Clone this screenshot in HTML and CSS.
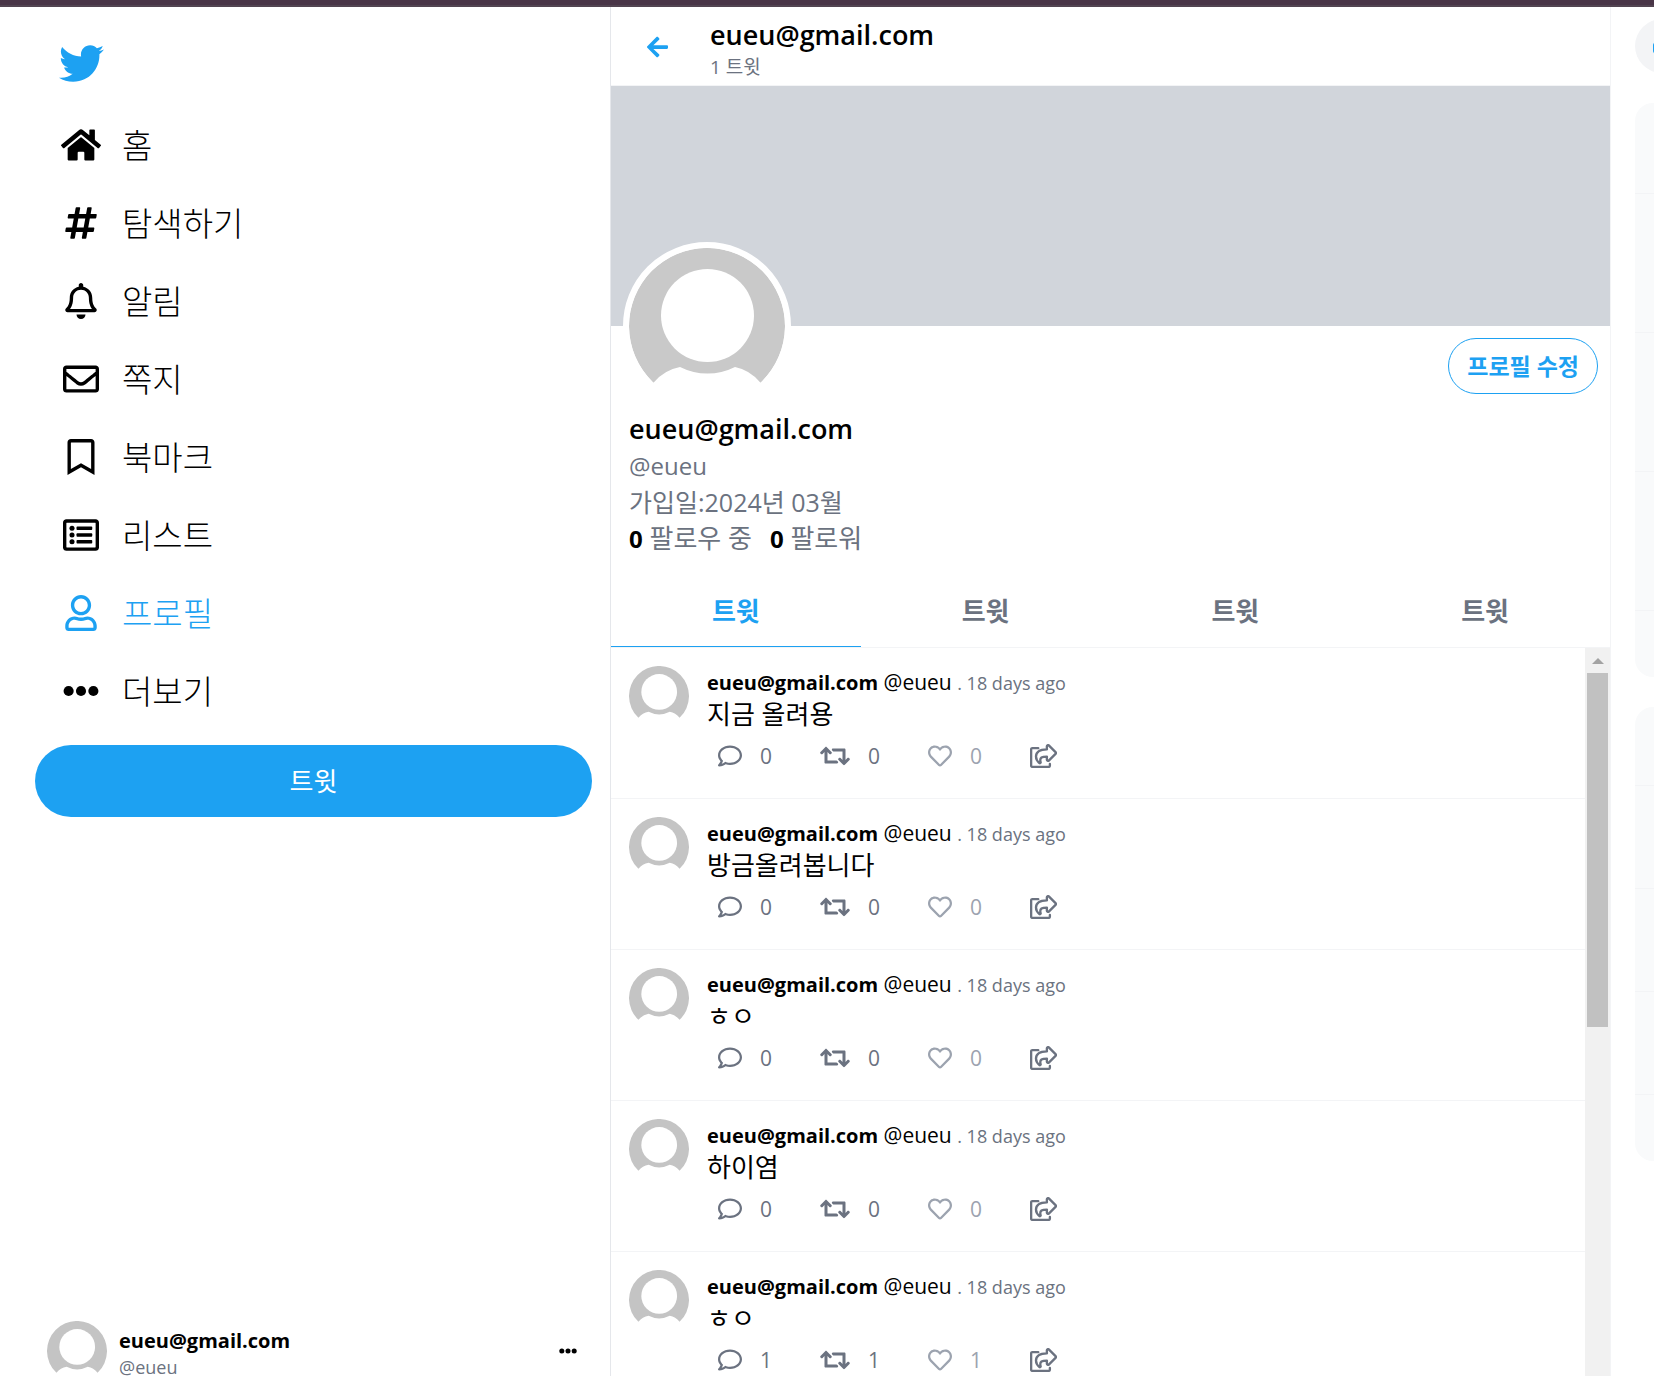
FILE: index.html
```html
<!DOCTYPE html>
<html lang="ko">
<head>
<meta charset="utf-8">
<meta name="viewport" content="width=device-width, initial-scale=1">
<title>eueu@gmail.com</title>
<link rel="stylesheet" href="styles.css">
</head>
<body>
<svg class="sprite" aria-hidden="true">
  <symbol id="comment" viewBox="0 0 512 512"><path d="M256 32C114.6 32 0 125.1 0 240c0 47.6 19.9 91.2 52.9 126.3C38 405.7 7 439.1 6.5 439.5c-6.6 7-8.4 17.2-4.6 26S14.4 480 24 480c61.5 0 110-25.7 139.1-46.3C192 442.8 223.2 448 256 448c141.4 0 256-93.1 256-208S397.4 32 256 32zm0 368c-26.7 0-53.1-4.1-78.4-12.1l-22.7-7.2-19.5 13.8c-14.3 10.1-33.9 21.4-57.5 29 7.3-12.1 14.4-25.7 19.9-40.2l10.6-28.1-20.6-21.8C69.7 314.1 48 282.2 48 240c0-88.2 93.3-160 208-160s208 71.8 208 160-93.3 160-208 160z"/></symbol>
  <symbol id="retweet" viewBox="0 0 640 512"><path d="M629.657 343.598L528.971 444.284c-9.373 9.372-24.568 9.372-33.941 0L394.343 343.598c-9.373-9.373-9.373-24.569 0-33.941l10.823-10.823c9.562-9.562 25.133-9.34 34.419.492L480 342.118V160H292.451a24.005 24.005 0 0 1-16.971-7.029l-16-16C244.361 121.851 255.069 96 276.451 96H520c13.255 0 24 10.745 24 24v222.118l40.416-42.792c9.285-9.831 24.856-10.054 34.419-.492l10.823 10.823c9.372 9.372 9.372 24.569-.001 33.941zm-265.138 15.431A23.999 23.999 0 0 0 347.548 352H160V169.881l40.416 42.792c9.286 9.831 24.856 10.054 34.419.491l10.822-10.822c9.373-9.373 9.373-24.569 0-33.941L144.971 67.716c-9.373-9.373-24.569-9.373-33.941 0L10.343 168.402c-9.373 9.373-9.373 24.569 0 33.941l10.822 10.822c9.562 9.562 25.133 9.34 34.419-.491L96 169.881V392c0 13.255 10.745 24 24 24h243.549c21.382 0 32.09-25.851 16.971-40.971l-16.001-16z"/></symbol>
  <symbol id="heart" viewBox="0 0 512 512"><path d="M458.4 64.3C400.6 15.7 311.3 23 256 79.3 200.7 23 111.4 15.6 53.6 64.3-21.6 127.6-10.6 230.8 43 285.5l175.4 178.7c10 10.2 23.4 15.9 37.6 15.9 14.3 0 27.6-5.6 37.6-15.8L469 285.6c53.5-54.7 64.7-157.9-10.6-221.3zm-23.6 187.5L259.4 430.5c-2.4 2.4-4.4 2.4-6.8 0L77.2 251.8c-36.5-37.2-43.9-107.6 7.3-150.7 38.9-32.7 98.9-27.8 136.5 10.5l35 35.7 35-35.7c37.8-38.5 97.8-43.2 136.5-10.6 51.1 43.1 43.5 113.9 7.3 150.8z"/></symbol>
  <symbol id="share" viewBox="0 0 576 512"><g fill="none" stroke="currentColor" stroke-width="50" stroke-linejoin="round" stroke-linecap="round"><path d="M176 88H48c-13 0-24 11-24 24v352c0 13 11 24 24 24h352c13 0 24-11 24-24v-40"/><path d="M360 48c0-21 26-32 41-17l144 144c10 10 10 24 0 34L401 353c-15 15-41 4-41-17v-68c-96 0-165 16-133 122 4 16-14 26-26 17-40-30-73-84-73-138 0-118 92-150 232-153z"/></g></symbol>
  <symbol id="dots" viewBox="0 0 512 512"><circle cx="80" cy="256" r="72"/><circle cx="256" cy="256" r="72"/><circle cx="432" cy="256" r="72"/></symbol>
  <symbol id="avatar" viewBox="0 0 156 156"><path d="M24.500 134.700A78 78 0 1 1 131.500 134.700Q121 122 106 119A61 61 0 0 1 51 119Q35 122 24.500 134.700Z"/><circle cx="78.500" cy="67.500" r="46.500" fill="#fff"/></symbol>
</svg>

<div class="topbar"></div>
<div class="app">
  <header class="sidebar">
    <a class="logo" href="#" aria-label="Twitter"><svg viewBox="0 0 512 512"><path d="M459.37 151.716c.325 4.548.325 9.097.325 13.645 0 138.72-105.583 298.558-298.558 298.558-59.452 0-114.68-17.219-161.137-47.106 8.447.974 16.568 1.299 25.34 1.299 49.055 0 94.213-16.568 130.274-44.832-46.132-.975-84.792-31.188-98.112-72.772 6.498.974 12.995 1.624 19.818 1.624 9.421 0 18.843-1.3 27.614-3.573-48.081-9.747-84.143-51.98-84.143-102.985v-1.299c13.969 7.797 30.214 12.67 47.431 13.319-28.264-18.843-46.781-51.005-46.781-87.391 0-19.492 5.197-37.36 14.294-52.954 51.655 63.675 129.3 105.258 216.365 109.807-1.624-7.797-2.599-15.918-2.599-24.04 0-57.828 46.782-104.934 104.934-104.934 30.213 0 57.502 12.67 76.67 33.137 23.715-4.548 46.456-13.32 66.599-25.34-7.798 24.366-24.366 44.833-46.132 57.827 21.117-2.273 41.584-8.122 60.426-16.243-14.292 20.791-32.161 39.308-52.628 54.253z"/></svg></a>
    <nav class="menu">
      <a href="#"><svg viewBox="0 0 576 512"><path d="M280.37 148.26L96 300.11V464a16 16 0 0 0 16 16l112.06-.29a16 16 0 0 0 15.92-16V368a16 16 0 0 1 16-16h64a16 16 0 0 1 16 16v95.64a16 16 0 0 0 16 16.05L464 480a16 16 0 0 0 16-16V300L295.67 148.26a12.19 12.19 0 0 0-15.3 0zM571.6 251.47L488 182.56V44.05a12 12 0 0 0-12-12h-56a12 12 0 0 0-12 12v72.61L318.47 43a48 48 0 0 0-61 0L4.34 251.47a12 12 0 0 0-1.6 16.9l25.5 31A12 12 0 0 0 45.15 301l235.22-193.74a12.19 12.19 0 0 1 15.3 0L530.9 301a12 12 0 0 0 16.9-1.6l25.5-31a12 12 0 0 0-1.7-16.93z"/></svg><span>홈</span></a>
      <a href="#"><svg viewBox="0 0 448 512"><path d="M440.667 182.109l7.143-40c1.313-7.355-4.342-14.109-11.813-14.109h-74.81l14.623-81.891C377.123 38.754 371.468 32 363.997 32h-40.632a12 12 0 0 0-11.813 9.891L296.175 128H197.54l14.623-81.891C213.477 38.754 207.822 32 200.35 32h-40.632a12 12 0 0 0-11.813 9.891L132.528 128H53.432a12 12 0 0 0-11.813 9.891l-7.143 40C33.163 185.246 38.818 192 46.289 192h74.81L98.242 320H19.146a12 12 0 0 0-11.813 9.891l-7.143 40C-1.123 377.246 4.532 384 12.003 384h74.81L72.19 465.891C70.877 473.246 76.532 480 84.003 480h40.632a12 12 0 0 0 11.813-9.891L151.826 384h98.634l-14.623 81.891C234.523 473.246 240.178 480 247.65 480h40.632a12 12 0 0 0 11.813-9.891L315.472 384h79.096a12 12 0 0 0 11.813-9.891l7.143-40c1.313-7.355-4.342-14.109-11.813-14.109h-74.81l22.857-128h79.096a12 12 0 0 0 11.813-9.891zM261.889 320h-98.634l22.857-128h98.634l-22.857 128z"/></svg><span>탐색하기</span></a>
      <a href="#"><svg viewBox="0 0 448 512"><path d="M439.39 362.29c-19.32-20.76-55.47-51.99-55.47-154.29 0-77.7-54.48-139.9-127.94-155.16V32c0-17.67-14.32-32-31.98-32s-31.98 14.33-31.98 32v20.84C118.56 68.1 64.08 130.3 64.08 208c0 102.3-36.15 133.53-55.47 154.29-6 6.45-8.66 14.16-8.61 21.71.11 16.4 12.98 32 32.1 32h383.8c19.12 0 32-15.6 32.1-32 .05-7.55-2.61-15.27-8.61-21.71zM67.53 368c21.22-27.97 44.42-74.33 44.53-159.42 0-.2-.06-.38-.06-.58 0-61.86 50.14-112 112-112s112 50.14 112 112c0 .2-.06.38-.06.58.11 85.1 23.31 131.46 44.53 159.42H67.53zM224 512c35.32 0 63.97-28.65 63.97-64H160.03c0 35.35 28.65 64 63.97 64z"/></svg><span>알림</span></a>
      <a href="#"><svg viewBox="0 0 512 512"><path d="M464 64H48C21.49 64 0 85.49 0 112v288c0 26.51 21.49 48 48 48h416c26.51 0 48-21.49 48-48V112c0-26.51-21.49-48-48-48zm0 48v40.805c-22.422 18.259-58.168 46.651-134.587 106.49-16.841 13.247-50.201 45.072-73.413 44.701-23.208.375-56.579-31.459-73.413-44.701C106.18 199.465 70.425 171.067 48 152.805V112h416zM48 400V214.398c22.914 18.251 55.409 43.862 104.938 82.646 21.857 17.205 60.134 55.186 103.062 54.955 42.717.231 80.509-37.199 103.053-54.947 49.528-38.783 82.032-64.401 104.947-82.653V400H48z"/></svg><span>쪽지</span></a>
      <a href="#"><svg viewBox="0 0 384 512"><path d="M336 0H48C21.49 0 0 21.49 0 48v464l192-112 192 112V48c0-26.51-21.49-48-48-48zm0 428.43l-144-84-144 84V54a6 6 0 0 1 6-6h276c3.314 0 6 2.683 6 5.996V428.43z"/></svg><span>북마크</span></a>
      <a href="#"><svg viewBox="0 0 512 512"><path d="M464 32H48C21.49 32 0 53.49 0 80v352c0 26.51 21.49 48 48 48h416c26.51 0 48-21.49 48-48V80c0-26.51-21.49-48-48-48zm-6 400H54a6 6 0 0 1-6-6V86a6 6 0 0 1 6-6h404a6 6 0 0 1 6 6v340a6 6 0 0 1-6 6z"/><circle cx="128" cy="160" r="36"/><circle cx="128" cy="256" r="36"/><circle cx="128" cy="352" r="36"/><rect x="192" y="136" width="224" height="48" rx="12"/><rect x="192" y="232" width="224" height="48" rx="12"/><rect x="192" y="328" width="224" height="48" rx="12"/></svg><span>리스트</span></a>
      <a href="#" class="current" aria-current="page"><svg viewBox="0 0 448 512"><path d="M313.6 304c-28.7 0-42.5 16-89.6 16-47.1 0-60.8-16-89.6-16C60.2 304 0 364.2 0 438.4V464c0 26.5 21.5 48 48 48h352c26.5 0 48-21.5 48-48v-25.6c0-74.2-60.2-134.4-134.4-134.4zM400 464H48v-25.6c0-47.6 38.8-86.4 86.4-86.4 14.6 0 38.3 16 89.6 16 51.7 0 74.9-16 89.6-16 47.6 0 86.4 38.8 86.4 86.4V464zM224 288c79.5 0 144-64.5 144-144S303.5 0 224 0 80 64.5 80 144s64.5 144 144 144zm0-240c52.9 0 96 43.1 96 96s-43.1 96-96 96-96-43.1-96-96 43.1-96 96-96z"/></svg><span>프로필</span></a>
      <a href="#"><svg><use href="#dots"/></svg><span>더보기</span></a>
    </nav>
    <button type="button" class="compose">트윗</button>
    <button type="button" class="account">
      <svg class="avatar"><use href="#avatar"/></svg>
      <span class="who"><strong>eueu@gmail.com</strong><span>@eueu</span></span>
      <svg class="more"><use href="#dots"/></svg>
    </button>
  </header>

  <main class="profile">
    <div class="heading">
      <a class="back" href="#" aria-label="뒤로"><svg viewBox="0 0 448 512"><path d="M257.5 445.1l-22.2 22.2c-9.4 9.4-24.6 9.4-33.9 0L7 273c-9.4-9.4-9.4-24.6 0-33.9L201.4 44.7c9.4-9.4 24.6-9.4 33.9 0l22.2 22.2c9.5 9.5 9.3 25-.4 34.3L136.6 216H424c13.3 0 24 10.7 24 24v32c0 13.3-10.7 24-24 24H136.6l120.5 114.8c9.8 9.3 10 24.8.4 34.3z"/></svg></a>
      <div class="title">
        <h1>eueu@gmail.com</h1>
        <p>1 트윗</p>
      </div>
    </div>
    <div class="banner"></div>
    <div class="portrait-row">
      <svg class="portrait"><use href="#avatar"/></svg>
      <button type="button" class="edit">프로필 수정</button>
    </div>
    <section class="bio">
      <h2>eueu@gmail.com</h2>
      <p>@eueu</p>
      <p class="joined">가입일:2024년 03월</p>
      <p class="follows"><span><b>0</b> 팔로우 중</span><span><b>0</b> 팔로워</span></p>
    </section>
    <div class="tabs">
      <button type="button" class="active">트윗</button>
      <button type="button">트윗</button>
      <button type="button">트윗</button>
      <button type="button">트윗</button>
    </div>
    <div class="feed">
      <div class="tweets">
        <article class="tweet">
          <svg class="avatar"><use href="#avatar"/></svg>
          <div>
            <p class="by"><strong>eueu@gmail.com</strong> <span>@eueu</span> <small>. 18 days ago</small></p>
            <p class="text">지금 올려용</p>
            <div class="actions">
              <button type="button"><svg><use href="#comment"/></svg>0</button>
              <button type="button"><svg class="wide"><use href="#retweet"/></svg>0</button>
              <button type="button" class="like"><svg><use href="#heart"/></svg>0</button>
              <button type="button" aria-label="공유"><svg class="mid"><use href="#share"/></svg></button>
            </div>
          </div>
        </article>
        <article class="tweet">
          <svg class="avatar"><use href="#avatar"/></svg>
          <div>
            <p class="by"><strong>eueu@gmail.com</strong> <span>@eueu</span> <small>. 18 days ago</small></p>
            <p class="text">방금올려봅니다</p>
            <div class="actions">
              <button type="button"><svg><use href="#comment"/></svg>0</button>
              <button type="button"><svg class="wide"><use href="#retweet"/></svg>0</button>
              <button type="button" class="like"><svg><use href="#heart"/></svg>0</button>
              <button type="button" aria-label="공유"><svg class="mid"><use href="#share"/></svg></button>
            </div>
          </div>
        </article>
        <article class="tweet">
          <svg class="avatar"><use href="#avatar"/></svg>
          <div>
            <p class="by"><strong>eueu@gmail.com</strong> <span>@eueu</span> <small>. 18 days ago</small></p>
            <p class="text">ㅎㅇ</p>
            <div class="actions">
              <button type="button"><svg><use href="#comment"/></svg>0</button>
              <button type="button"><svg class="wide"><use href="#retweet"/></svg>0</button>
              <button type="button" class="like"><svg><use href="#heart"/></svg>0</button>
              <button type="button" aria-label="공유"><svg class="mid"><use href="#share"/></svg></button>
            </div>
          </div>
        </article>
        <article class="tweet">
          <svg class="avatar"><use href="#avatar"/></svg>
          <div>
            <p class="by"><strong>eueu@gmail.com</strong> <span>@eueu</span> <small>. 18 days ago</small></p>
            <p class="text">하이염</p>
            <div class="actions">
              <button type="button"><svg><use href="#comment"/></svg>0</button>
              <button type="button"><svg class="wide"><use href="#retweet"/></svg>0</button>
              <button type="button" class="like"><svg><use href="#heart"/></svg>0</button>
              <button type="button" aria-label="공유"><svg class="mid"><use href="#share"/></svg></button>
            </div>
          </div>
        </article>
        <article class="tweet">
          <svg class="avatar"><use href="#avatar"/></svg>
          <div>
            <p class="by"><strong>eueu@gmail.com</strong> <span>@eueu</span> <small>. 18 days ago</small></p>
            <p class="text">ㅎㅇ</p>
            <div class="actions">
              <button type="button"><svg><use href="#comment"/></svg>1</button>
              <button type="button"><svg class="wide"><use href="#retweet"/></svg>1</button>
              <button type="button" class="like"><svg><use href="#heart"/></svg>1</button>
              <button type="button" aria-label="공유"><svg class="mid"><use href="#share"/></svg></button>
            </div>
          </div>
        </article>
      </div>
      <div class="scrollbar" aria-hidden="true">
        <svg viewBox="0 0 12 6"><path d="M6 0L12 6H0Z"/></svg>
        <div class="thumb"></div>
      </div>
    </div>
  </main>

  <aside class="extras">
    <label class="search"><svg viewBox="0 0 24 24"><circle cx="9" cy="14" r="8"/><path d="M15 19L19 23"/></svg><input type="search" aria-label="검색"></label>
    <div class="card trends"><div></div><div></div><div></div><div></div><div></div></div>
    <div class="card people"><div></div><div></div><div></div><div></div><div></div></div>
  </aside>
</div>
</body>
</html>
```
FILE: styles.css
```css
:root {
  --blue: #1da1f2;
  --gray: #6b7280;
  --gray-light: #9ca3af;
  --line: #f3f4f6;
}

* {
  box-sizing: border-box;
}

body {
  margin: 0;
  overflow: hidden;
  background: #fff;
  color: #000;
  font-family: "Open Sans", "Noto Sans CJK KR", sans-serif;
  font-size: 24px;
  line-height: 36px;
}

h1, h2, p {
  margin: 0;
}

a {
  color: inherit;
  text-decoration: none;
}

button {
  padding: 0;
  border: 0;
  background: none;
  color: inherit;
  font: inherit;
  text-align: left;
}

svg {
  display: block;
  flex: none;
  fill: currentColor;
}

.sprite {
  display: none;
}

.topbar {
  height: 7px;
  background: #493547;
  border-bottom: 2px solid #524451;
}

.app {
  display: grid;
  grid-template-columns: minmax(0, 611fr) minmax(0, 1000fr) minmax(0, 43fr);
  height: 100vh;
}

/* Sidebar */

.sidebar {
  display: flex;
  flex-direction: column;
  padding: 0 18px 2px 35px;
  border-right: 1px solid #e5e7eb;
}

.logo {
  padding: 34px 24px 20px;
  color: var(--blue);
}

.logo svg {
  width: 45px;
  height: 45px;
}

.menu {
  display: flex;
  flex-direction: column;
}

.menu a {
  display: flex;
  align-items: center;
  gap: 21px;
  height: 78px;
  padding-left: 26px;
  font-size: 33px;
  font-weight: 300;
}

.menu span {
  padding-top: 2px;
}

.menu svg {
  width: 40px;
  height: 36px;
}

.menu .current {
  color: var(--blue);
}

.compose {
  height: 72px;
  margin-top: 15px;
  border-radius: 36px;
  background: var(--blue);
  color: #fff;
  font-size: 26px;
  text-align: center;
}

.account {
  display: flex;
  align-items: center;
  gap: 12px;
  margin-top: auto;
  padding: 0 15px 0 12px;
}

.avatar {
  width: 60px;
  height: 60px;
  color: #c4c4c4;
}

.who {
  display: flex;
  flex: 1;
  flex-direction: column;
  padding-top: 6px;
  color: var(--gray);
  font-size: 18px;
  line-height: 27px;
}

.who strong {
  color: #000;
  font-size: 20px;
}

.more {
  width: 18px;
  height: 18px;
}

/* Profile */

.profile {
  display: flex;
  flex-direction: column;
  min-height: 0;
  border-right: 1px solid var(--line);
}

.heading {
  display: flex;
  align-items: center;
  gap: 42px;
  height: 79px;
  padding: 2px 0 0 36px;
  border-bottom: 1px solid var(--line);
}

.title {
  padding-top: 4px;
}

.heading h1, .bio h2 {
  font-size: 27px;
  font-weight: 600;
}

.heading p {
  color: var(--gray);
  font-size: 19px;
  line-height: 28px;
}

.back {
  color: var(--blue);
}

.back svg {
  width: 21px;
  height: 24px;
}

.banner {
  flex: none;
  height: 240px;
  background: #d1d5db;
}

.portrait-row {
  display: flex;
  align-items: flex-start;
  justify-content: space-between;
  padding: 0 12px;
}

.portrait {
  width: 168px;
  height: 168px;
  margin-top: -84px;
  border: 6px solid #fff;
  border-radius: 50%;
  background: #fff;
  color: #c9c9c9;
}

.edit {
  height: 56px;
  margin-top: 12px;
  padding: 0 18px;
  border: 1px solid var(--blue);
  border-radius: 28px;
  color: var(--blue);
  font-size: 23px;
  font-weight: 600;
}

.bio {
  height: 148px;
  padding: 0 18px;
  color: var(--gray);
}

.bio h2 {
  color: #000;
  line-height: 38px;
}

.joined {
  font-size: 25px;
}

.follows {
  display: flex;
  gap: 18px;
  font-size: 26px;
}

.follows b {
  color: #000;
  font-size: 24px;
}

.tabs {
  display: grid;
  grid-template-columns: repeat(4, 1fr);
  flex: none;
  height: 74px;
  margin-top: 16px;
  border-bottom: 1px solid var(--line);
}

.tabs button {
  padding-top: 2px;
  border-bottom: 1px solid transparent;
  color: var(--gray);
  font-size: 26px;
  font-weight: 700;
  text-align: center;
}

.tabs .active {
  border-color: var(--blue);
  color: var(--blue);
}

.feed {
  display: flex;
  flex: 1;
  min-height: 0;
  overflow: hidden;
}

.tweets {
  flex: 1;
}

.tweet {
  display: flex;
  gap: 18px;
  height: 151px;
  padding: 18px;
  border-bottom: 1px solid var(--line);
}

.by {
  font-size: 21px;
  line-height: 33px;
}

.by strong {
  font-size: 20px;
}

.by small {
  color: var(--gray);
  font-size: 18px;
}

.text {
  font-size: 26px;
  line-height: 28px;
}

.actions {
  display: flex;
  gap: 48px;
  margin-top: 10px;
  padding-left: 11px;
  color: var(--gray);
}

.actions button {
  display: flex;
  align-items: center;
  gap: 18px;
  font-size: 21px;
}

.actions svg {
  width: 24px;
  height: 24px;
}

.actions .mid {
  width: 27px;
}

.actions .wide {
  width: 30px;
}

.actions .like {
  color: var(--gray-light);
}

.scrollbar {
  display: flex;
  flex-direction: column;
  align-items: center;
  gap: 9px;
  width: 25px;
  padding-top: 10px;
  background: #f1f1f1;
  color: #a3a3a3;
}

.scrollbar svg {
  width: 12px;
  height: 6px;
}

.thumb {
  width: 21px;
  height: 354px;
  background: #c1c1c1;
}

/* Right column */

.extras {
  padding: 12px 0 0 24px;
  overflow: hidden;
}

.search {
  display: flex;
  align-items: center;
  gap: 12px;
  width: 480px;
  height: 54px;
  padding-left: 18px;
  border-radius: 27px;
  background: var(--line);
  color: var(--blue);
}

.search svg {
  width: 24px;
  height: 24px;
  fill: none;
  stroke: currentColor;
  stroke-width: 3px;
}

.search input {
  flex: 1;
  border: 0;
  background: none;
  font: inherit;
}

.card {
  width: 480px;
  margin-top: 30px;
  border-radius: 18px;
  background: #f9fafb;
}

.card div {
  height: 139px;
  border-bottom: 1px solid var(--line);
}

.card div:first-child {
  height: 91px;
}

.card div:last-child {
  height: 66px;
  border-bottom: 0;
}

.people div {
  height: 103px;
}

.people div:first-child {
  height: 79px;
}
```
